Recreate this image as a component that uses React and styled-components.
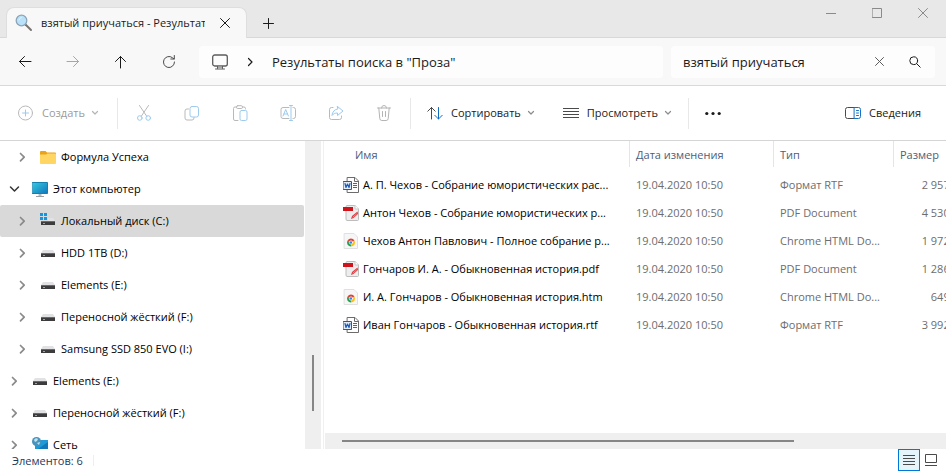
import React, { useState } from 'react';
import styled, { createGlobalStyle } from 'styled-components';

const GlobalStyle = createGlobalStyle`
  * {
    box-sizing: border-box;
  }

  body {
    margin: 0;
    overflow: hidden;
    font-family: 'Open Sans', 'Noto Sans', sans-serif;
    font-size: 11px;
    line-height: 16px;
    color: #000;
  }

  button,
  input {
    font: inherit;
    color: inherit;
  }
`;

const Window = styled.div`
  display: flex;
  flex-direction: column;
  height: 100vh;
  background: #fff;
  overflow: hidden;
`;

const IconButton = styled.button`
  display: flex;
  align-items: center;
  justify-content: center;
  flex: none;
  width: ${({ $width }) => $width || 32}px;
  height: ${({ $height }) => $height || 32}px;
  padding: 0;
  border: 0;
  border-radius: 4px;
  background: transparent;
  color: ${({ $color }) => $color || '#1b1b1b'};
`;

/* Title bar */
const TitleBar = styled.header`
  display: flex;
  align-items: flex-end;
  flex: none;
  height: 38px;
  padding-left: 6px;
  background: #e8e8e8;
  box-shadow: inset 0 -1px 0 #d8d8d8;
`;

const Tab = styled.div`
  display: flex;
  align-items: center;
  width: 241px;
  height: 31px;
  padding: 0 6px 0 8px;
  border: 1px solid #dedede;
  border-bottom: 0;
  border-radius: 8px 8px 0 0;
  background: #f8f8f8;
`;

const TabTitle = styled.span`
  flex: 1;
  margin: 0 5px 0 8px;
  overflow: hidden;
  white-space: nowrap;
  color: #1b1b1b;
`;

const WindowControls = styled.div`
  display: flex;
  align-self: flex-start;
  margin-left: auto;
`;

/* Navigation bar */
const NavBar = styled.div`
  display: flex;
  align-items: center;
  flex: none;
  height: 48px;
  padding: 0 11px 0 9px;
  border-bottom: 1px solid #d9d9d9;
  background: #f8f8f8;
`;

const NavButtons = styled.div`
  display: flex;
  gap: 16px;
  margin-right: 14px;
`;

const AddressBar = styled.div`
  display: flex;
  align-items: center;
  flex: 1;
  gap: 14px;
  height: 32px;
  margin-right: 8px;
  padding-left: 13px;
  border-radius: 4px;
  background: #fdfdfd;
  font-size: 13px;
  color: #1b1b1b;
  white-space: nowrap;
`;

const SearchBox = styled.div`
  display: flex;
  align-items: center;
  flex: none;
  width: 264px;
  height: 32px;
  padding: 0 2px 0 12px;
  border-radius: 4px;
  background: #fdfdfd;
`;

const SearchInput = styled.input`
  flex: 1;
  min-width: 0;
  height: 24px;
  padding: 0;
  border: 0;
  outline: 0;
  background: transparent;
  font-size: 13px;
  line-height: 24px;
  color: #1b1b1b;
`;

/* Command bar */
const CommandBar = styled.div`
  display: flex;
  align-items: center;
  flex: none;
  height: 55px;
  padding-right: 25px;
  border-bottom: 1px solid #d5d5d5;
`;

const CommandButton = styled.button`
  display: flex;
  align-items: center;
  flex: none;
  height: 32px;
  padding: 0;
  border: 0;
  background: transparent;
  color: #1b1b1b;
  white-space: nowrap;

  &:disabled {
    color: #9b9b9b;
  }
`;

const CommandLabel = styled.span`
  margin-left: 8px;
`;

const CommandGroup = styled.div`
  display: flex;
  gap: ${({ $gap }) => $gap || 0}px;
  padding: 0 ${({ $pad }) => $pad}px;
`;

const MenuMark = styled.span`
  display: flex;
  margin-left: 6px;
`;

const Divider = styled.span`
  flex: none;
  width: 1px;
  height: 31px;
  background: #e8e8e8;
`;

const Spacer = styled.span`
  flex: 1;
`;

/* Body */
const Body = styled.main`
  display: flex;
  flex: 1;
  min-height: 0;
`;

const Sidebar = styled.nav`
  display: flex;
  flex: none;
  width: 324px;
  padding-right: 2px;
  border-right: 1px solid #f0f0f0;
  overflow: hidden;
`;

const Tree = styled.ul`
  flex: 1;
  height: 100%;
  margin: 0;
  padding: 0;
  overflow: hidden;
  list-style: none;
`;

const TreeRow = styled.li`
  display: flex;
  align-items: center;
  height: 32px;
  margin-right: 1px;
  padding-left: ${({ $level }) => 6 + $level * 8}px;
  border-radius: 2px;
  background: ${({ $selected }) => ($selected ? '#d9d9d9' : 'transparent')};
`;

const TreeLink = styled.a`
  display: flex;
  align-items: center;
  flex: 1;
  gap: 5px;
  margin-left: 10px;
  color: #000;
  text-decoration: none;
  white-space: nowrap;
`;

const VerticalScroll = styled.div`
  flex: none;
  width: 16px;
  padding: 214px 7px 0;
  background: #efefef;
`;

const VerticalThumb = styled.div`
  width: 2px;
  height: 56px;
  background: #868686;
`;

const FilePane = styled.section`
  display: flex;
  flex-direction: column;
  flex: 1;
  min-width: 0;
  padding-left: 1px;
`;

const TableArea = styled.div`
  flex: 1;
  min-height: 0;
  overflow: hidden;
`;

const FileTable = styled.table`
  width: 649px;
  border-collapse: separate;
  border-spacing: 0;
  table-layout: fixed;
`;

const HeadCell = styled.th`
  width: ${({ $width }) => $width}px;
  height: 26px;
  padding: 2px 0 0 ${({ $pad }) => $pad || 6}px;
  border-right: 1px solid #e5e5e5;
  font-weight: 400;
  text-align: left;
  color: #4c607a;
`;

const Cell = styled.td`
  height: 28px;
  padding: 0 8px 0 6px;
  white-space: nowrap;
  text-align: ${({ $align }) => $align || 'left'};
  color: #6d6d6d;
`;

const HeadGap = styled.tr`
  height: 4px;
`;

const FileName = styled.div`
  display: flex;
  align-items: center;
  gap: 4px;
  padding-left: 12px;
  color: #000;

  svg {
    flex: none;
  }
`;

const HorizontalScroll = styled.div`
  flex: none;
  height: 16px;
  padding: 7px 17px;
  background: #efefef;
`;

const HorizontalThumb = styled.div`
  width: 77%;
  height: 2px;
  background: #868686;
`;

/* Status bar */
const StatusBar = styled.footer`
  display: flex;
  align-items: center;
  flex: none;
  height: 22px;
  padding: 0 4px 0 12px;
  color: #1e395b;
`;

const StatusText = styled.span`
  padding: 2px 10px 0 0;
`;

const StatusDivider = styled.span`
  width: 1px;
  height: 11px;
  background: #eeeeee;
`;

const ViewButton = styled.button`
  display: flex;
  align-items: center;
  justify-content: center;
  width: 22px;
  height: 22px;
  padding: 0;
  border: ${({ $active }) => ($active ? '1px solid #0078d7' : '0')};
  background: ${({ $active }) => ($active ? '#e5f3fb' : 'transparent')};
`;

function Svg({ size = 16, children }) {
  return (
    <svg
      width={size}
      height={size}
      viewBox={`0 0 ${size} ${size}`}
      fill="none"
      stroke="currentColor"
      strokeLinecap="round"
      strokeLinejoin="round"
      aria-hidden="true"
    >
      {children}
    </svg>
  );
}

const GRAY = '#b9b9b9';
const SKY = '#9ccbee';

const Chevron = ({ color = '#8c8c8c' }) => (
  <MenuMark>
    <Svg size={8}><path d="M1.500 2.500 4 5l2.500-2.500" stroke={color} strokeWidth="1.200" /></Svg>
  </MenuMark>
);

const TreeArrow = ({ open }) => (
  <Svg size={16}>
    {open
      ? <path d="m4.500 6 4 4 4-4" stroke="#333" strokeWidth="1.500" />
      : <path d="m6.500 4.500 3.700 3.700-3.700 3.700" stroke="#8a8a8a" strokeWidth="1.700" />}
  </Svg>
);

const CloseIcon = ({ size = 10 }) => (
  <Svg size={size}><path d={`M.5.5l${size - 1} ${size - 1}M${size - 0.5}.5l-${size - 1} ${size - 1}`} /></Svg>
);

const SearchTabIcon = () => (
  <Svg size={18}>
    <path d="m10.500 10.500 5.500 5.500" stroke="#77736f" strokeWidth="2" />
    <circle cx="6.500" cy="6.500" r="5.300" fill="#b9e1fa" stroke="#8ba5b8" strokeWidth="1.300" />
    <path d="M4 6a3 3 0 0 1 2.500-2.500" stroke="#e1f3ff" />
  </Svg>
);

const MonitorIcon = () => (
  <Svg size={16}>
    <rect x=".7" y="1" width="14.600" height="11" rx="2" stroke="#5c5c5c" strokeWidth="1.300" />
    <path d="M5.500 12.500v2M10.500 12.500v2M3.500 15h9" stroke="#5c5c5c" />
    <path d="M6 12.500h4v2H6z" fill="#aaa" stroke="none" />
  </Svg>
);

const CreateIcon = () => (
  <Svg>
    <circle cx="7.500" cy="8" r="7" stroke={GRAY} />
    <path d="M7.500 5v6M4.500 8h6" stroke={SKY} />
  </Svg>
);

const CutIcon = () => (
  <Svg>
    <path d="m3.500.5 7.200 10.700M12.500.5 5.300 11.200" stroke={GRAY} />
    <circle cx="3.800" cy="13" r="2.300" stroke={SKY} />
    <circle cx="12.200" cy="13" r="2.300" stroke={SKY} />
  </Svg>
);

const CopyIcon = () => (
  <Svg>
    <path d="M4.500 4H3a2 2 0 0 0-2 2v7a2 2 0 0 0 2 2h5a2 2 0 0 0 2-2v-.5" stroke={GRAY} />
    <rect x="6" y="1.500" width="8.500" height="10.500" rx="2" stroke={SKY} />
  </Svg>
);

const PasteIcon = () => (
  <Svg>
    <path d="M6 15.500H3A1.500 1.500 0 0 1 1.500 14V3.500A1.500 1.500 0 0 1 3 2h1.500M10.500 2H12a1.500 1.500 0 0 1 1.500 1.500V4" stroke={GRAY} />
    <rect x="4.500" y=".7" width="6" height="2.800" rx="1.200" stroke={GRAY} />
    <rect x="8" y="5.500" width="7" height="10" rx="1.500" stroke={SKY} />
  </Svg>
);

const RenameIcon = () => (
  <Svg>
    <path d="M9 2.500H3a2 2 0 0 0-2 2v7a2 2 0 0 0 2 2h6M13 2.500h.5a2 2 0 0 1 2 2v7a2 2 0 0 1-2 2H13" stroke={GRAY} />
    <path d="M9.500.5h3M9.500 15.500h3M11 .5v15M3 11l2.700-6.500L8.400 11M3.900 9h3.600" stroke={SKY} />
  </Svg>
);

const ShareIcon = () => (
  <Svg>
    <path d="M5 2.500H3.500a2 2 0 0 0-2 2v8a2 2 0 0 0 2 2h8a2 2 0 0 0 2-2V11" stroke={GRAY} />
    <path d="M9.500 1.500 15 6l-5.500 4.500V8C7 8 5.500 8.500 4 10.500 4.300 7 6.500 4.300 9.500 4z" stroke={SKY} />
  </Svg>
);

const DeleteIcon = () => (
  <Svg>
    <path d="M1.500 3h13M5.500 3a2.500 2.500 0 0 1 5 0M2.800 3l1 10.700a2 2 0 0 0 2 1.800h4.400a2 2 0 0 0 2-1.800l1-10.700M6.500 6.500v5M9.500 6.500v5" stroke="#b4b4b4" />
  </Svg>
);

const SortIcon = () => (
  <Svg>
    <path d="M4.500 14V2.500M.8 6.200 4.500 2.500l3.700 3.700" stroke="#4a4a4a" />
    <path d="M11.500 2.500V14M7.800 10.300l3.700 3.700 3.700-3.700" stroke="#0f6cbd" />
  </Svg>
);

const LinesIcon = () => (
  <Svg><path d="M0 3.500h16M0 6.500h16M0 9.500h16M0 12.500h16" stroke="#4a4a4a" strokeLinecap="butt" /></Svg>
);

const DetailsIcon = () => (
  <Svg>
    <path d="M9.500 2.500h-7a2 2 0 0 0-2 2v7a2 2 0 0 0 2 2h7" stroke="#4a4a4a" />
    <path d="M9.500 2.500h4a2 2 0 0 1 2 2v7a2 2 0 0 1-2 2h-4zM11.500 5.500h2M11.500 8h2M11.500 10.500h2" stroke="#1672c4" />
  </Svg>
);

const FolderIcon = () => (
  <Svg>
    <path d="M0 3a1 1 0 0 1 1-1h4.500L7 3.500h8a1 1 0 0 1 1 1V8H0z" fill="#e8a317" stroke="none" />
    <path d="M0 5.500h6L7.500 4.500H15a1 1 0 0 1 1 1v8.500a1 1 0 0 1-1 1H1a1 1 0 0 1-1-1z" fill="#ffd563" stroke="none" />
  </Svg>
);

const ComputerIcon = () => (
  <Svg>
    <defs>
      <linearGradient id="screen" x1="0" y1="0" x2="1" y2="1">
        <stop stopColor="#35c9dd" />
        <stop offset="1" stopColor="#1076bd" />
      </linearGradient>
    </defs>
    <rect x=".5" y="1.500" width="15" height="11" fill="url(#screen)" stroke="#1480ad" />
    <path d="M6.500 13h3v2h-3z" fill="#b6bdc3" stroke="none" />
    <path d="M4 15.500h8" stroke="#98a0a6" strokeLinecap="butt" />
  </Svg>
);

const DriveIcon = ({ system }) => (
  <Svg>
    <path d="M3 5h10l2 3H1z" fill="#e2e2e5" stroke="none" />
    <path d="M1 8h14v4H1z" fill="#3c3c3c" stroke="none" />
    <path d="M1 8h14v1H1z" fill="#6a6a6a" stroke="none" />
    <path d="M3 10h2v1H3z" fill="#39e35a" stroke="none" />
    {system && (
      <>
        <path d="M0 0h8v8H0z" fill="#d9d9d9" stroke="none" />
        <path d="M0 0h3v3H0zM4 0h3v3H4zM0 4h3v3H0zM4 4h3v3H4z" fill="#1595df" stroke="none" />
      </>
    )}
  </Svg>
);

const NetworkIcon = () => (
  <Svg>
    <path d="M3 3h13v9H3z" fill="#1f9ad6" stroke="none" />
    <path d="M6 12 16 5v7z" fill="#1378ba" stroke="none" />
    <path d="M9 12h2v3H9z" fill="#b6bdc3" stroke="none" />
    <circle cx="4.500" cy="4.500" r="4.500" fill="#4a93bd" stroke="none" />
    <path d="M2 3c1-2 3-2 4-1L5 4 3 5zM5 6l3-1-1 3z" fill="#bfe3ef" stroke="none" />
  </Svg>
);

const WordIcon = () => (
  <Svg>
    <path d="M4.500.5H12L15.500 4v11.500h-11z" fill="#fff" stroke="#6c6c6c" />
    <path d="M11.500.5v4h4" stroke="#6c6c6c" />
    <path d="M10 6.500h4M10 8.500h4M10 10.500h4" stroke="#2b6bc4" strokeLinecap="butt" />
    <rect x=".5" y="4.500" width="8" height="8" fill="#e3edf9" stroke="#1c5bb9" />
    <path d="m2 6.500 1 4 1.500-3.500L6 10.500l1-4" stroke="#1c5bb9" strokeWidth="1.200" />
  </Svg>
);

const PdfIcon = () => (
  <Svg>
    <path d="M3 1.500a1 1 0 0 1 1-1h8L15.500 4v10.500a1 1 0 0 1-1 1H4a1 1 0 0 1-1-1z" fill="#ededed" stroke="#bdbdbd" />
    <path d="M12 .5V4h3.500" fill="#fff" stroke="#c9c9c9" />
    <path d="M0 2h10v4H0z" fill="#d0131b" stroke="none" />
    <path d="m8 14 1-3 5.500-4.500L15 9l-4.500 4z" fill="#dc3c42" stroke="none" />
    <path d="m10 12 3.500-3" stroke="#f0a5a8" strokeWidth=".7" />
  </Svg>
);

const ChromeIcon = () => (
  <Svg>
    <path d="M1.500.5H11L14.500 4v11.500h-13z" fill="#f6f6f6" stroke="#e0e0e0" />
    <path d="M8 9.500 4.540 7.500a4 4 0 0 1 6.920 0z" fill="#df4335" stroke="none" />
    <path d="M8 9.500 11.460 7.500A4 4 0 0 1 8 13.500z" fill="#fbbf12" stroke="none" />
    <path d="M8 9.500v4a4 4 0 0 1-3.460-6z" fill="#2a9f4b" stroke="none" />
    <circle cx="8" cy="9.500" r="1.700" fill="#3b7ded" stroke="#fff" strokeWidth=".7" />
  </Svg>
);

const fileIcons = { word: WordIcon, pdf: PdfIcon, chrome: ChromeIcon };

const places = [
  { id: 'folder', name: 'Формула Успеха', level: 1, icon: <FolderIcon /> },
  { id: 'pc', name: 'Этот компьютер', level: 0, icon: <ComputerIcon />, open: true },
  { id: 'c', name: 'Локальный диск (C:)', level: 1, icon: <DriveIcon system /> },
  { id: 'd', name: 'HDD 1TB (D:)', level: 1, icon: <DriveIcon /> },
  { id: 'e', name: 'Elements (E:)', level: 1, icon: <DriveIcon /> },
  { id: 'f', name: 'Переносной жёсткий (F:)', level: 1, icon: <DriveIcon /> },
  { id: 'i', name: 'Samsung SSD 850 EVO (I:)', level: 1, icon: <DriveIcon /> },
  { id: 'e2', name: 'Elements (E:)', level: 0, icon: <DriveIcon /> },
  { id: 'f2', name: 'Переносной жёсткий (F:)', level: 0, icon: <DriveIcon /> },
  { id: 'net', name: 'Сеть', level: 0, icon: <NetworkIcon /> },
];

const files = [
  { icon: 'word', name: 'А. П. Чехов - Собрание юмористических рас...', type: 'Формат RTF', size: '2 957 КБ' },
  { icon: 'pdf', name: 'Антон Чехов - Собрание юмористических р...', type: 'PDF Document', size: '4 530 КБ' },
  { icon: 'chrome', name: 'Чехов Антон Павлович - Полное собрание р...', type: 'Chrome HTML Do...', size: '1 972 КБ' },
  { icon: 'pdf', name: 'Гончаров И. А. - Обыкновенная история.pdf', type: 'PDF Document', size: '1 286 КБ' },
  { icon: 'chrome', name: 'И. А. Гончаров - Обыкновенная история.htm', type: 'Chrome HTML Do...', size: '649 КБ' },
  { icon: 'word', name: 'Иван Гончаров - Обыкновенная история.rtf', type: 'Формат RTF', size: '3 992 КБ' },
];

function App() {
  const [selected, setSelected] = useState('c');
  const [query, setQuery] = useState('взятый приучаться');

  return (
    <Window>
      <GlobalStyle />
      <TitleBar>
        <Tab>
          <SearchTabIcon />
          <TabTitle>взятый приучаться - Результаты</TabTitle>
          <IconButton $width={30} $height={24} aria-label="Закрыть вкладку"><CloseIcon /></IconButton>
        </Tab>
        <IconButton $width={42} $height={30} aria-label="Новая вкладка">
          <Svg size={11}><path d="M5.500.5v10M.5 5.500h10" /></Svg>
        </IconButton>
        <WindowControls>
          <IconButton $width={46} $height={26} $color="#8a8a8a" aria-label="Свернуть">
            <Svg size={10}><path d="M0 5.500h10" /></Svg>
          </IconButton>
          <IconButton $width={46} $height={26} $color="#8a8a8a" aria-label="Развернуть">
            <Svg size={10}><rect x=".5" y=".5" width="9" height="9" /></Svg>
          </IconButton>
          <IconButton $width={46} $height={26} $color="#8a8a8a" aria-label="Закрыть"><CloseIcon /></IconButton>
        </WindowControls>
      </TitleBar>

      <NavBar>
        <NavButtons>
          <IconButton aria-label="Назад">
            <Svg><path d="M14 7.500H2.500M7.500 2.500l-5 5 5 5" /></Svg>
          </IconButton>
          <IconButton $color="#a6a6a6" aria-label="Вперёд" disabled>
            <Svg><path d="M2 7.500h11.500M8.500 2.500l5 5-5 5" /></Svg>
          </IconButton>
          <IconButton aria-label="Вверх">
            <Svg><path d="M7.500 14V2.500M2.500 7.500l5-5 5 5" /></Svg>
          </IconButton>
          <IconButton aria-label="Обновить">
            <Svg><path d="M13.500 8a5.500 5.500 0 1 1-2.100-4.300L13 5M13.300 1.500V5H9.800" stroke="#4a4a4a" /></Svg>
          </IconButton>
        </NavButtons>
        <AddressBar>
          <MonitorIcon />
          <Svg><path d="m6.500 4.500 3.500 3.500-3.500 3.500" strokeWidth="1.200" /></Svg>
          <span>Результаты поиска в "Проза"</span>
        </AddressBar>
        <SearchBox>
          <SearchInput aria-label="Поиск" value={query} onChange={e => setQuery(e.target.value)} />
          <IconButton $width={36} $color="#5c5c5c" aria-label="Очистить" onClick={() => setQuery('')}>
            <CloseIcon size={9} />
          </IconButton>
          <IconButton $width={36} aria-label="Найти">
            <Svg size={12}><circle cx="4.700" cy="4.700" r="3.900" /><path d="m7.700 7.700 3.500 3.500" /></Svg>
          </IconButton>
        </SearchBox>
      </NavBar>

      <CommandBar>
        <CommandGroup $pad={18}>
          <CommandButton disabled>
            <CreateIcon />
            <CommandLabel>Создать</CommandLabel>
            <Chevron color="#b5b5b5" />
          </CommandButton>
        </CommandGroup>
        <Divider />
        <CommandGroup $gap={16} $pad={10}>
          <IconButton aria-label="Вырезать" disabled><CutIcon /></IconButton>
          <IconButton aria-label="Копировать" disabled><CopyIcon /></IconButton>
          <IconButton aria-label="Вставить" disabled><PasteIcon /></IconButton>
          <IconButton aria-label="Переименовать" disabled><RenameIcon /></IconButton>
          <IconButton aria-label="Поделиться" disabled><ShareIcon /></IconButton>
          <IconButton aria-label="Удалить" disabled><DeleteIcon /></IconButton>
        </CommandGroup>
        <Divider />
        <CommandGroup $gap={28} $pad={16}>
          <CommandButton>
            <SortIcon />
            <CommandLabel>Сортировать</CommandLabel>
            <Chevron />
          </CommandButton>
          <CommandButton>
            <LinesIcon />
            <CommandLabel>Просмотреть</CommandLabel>
            <Chevron />
          </CommandButton>
        </CommandGroup>
        <Divider />
        <CommandGroup $pad={8}>
          <IconButton aria-label="Дополнительно">
            <Svg>
              <g fill="#1b1b1b" stroke="none">
                <circle cx="1.800" cy="8.500" r="1.600" />
                <circle cx="8" cy="8.500" r="1.600" />
                <circle cx="14.200" cy="8.500" r="1.600" />
              </g>
            </Svg>
          </IconButton>
        </CommandGroup>
        <Spacer />
        <CommandButton>
          <DetailsIcon />
          <CommandLabel>Сведения</CommandLabel>
        </CommandButton>
      </CommandBar>

      <Body>
        <Sidebar aria-label="Область навигации">
          <Tree>
            {places.map(place => (
              <TreeRow key={place.id} $level={place.level} $selected={selected === place.id}>
                <IconButton $width={16} $height={16} aria-label={`Развернуть ${place.name}`}>
                  <TreeArrow open={place.open} />
                </IconButton>
                <TreeLink href={`#${place.id}`} onClick={() => setSelected(place.id)}>
                  {place.icon}
                  {place.name}
                </TreeLink>
              </TreeRow>
            ))}
          </Tree>
          <VerticalScroll><VerticalThumb /></VerticalScroll>
        </Sidebar>

        <FilePane>
          <TableArea>
            <FileTable>
              <thead>
                <tr>
                  <HeadCell $width={305} $pad={30}>Имя</HeadCell>
                  <HeadCell $width={144}>Дата изменения</HeadCell>
                  <HeadCell $width={120}>Тип</HeadCell>
                  <HeadCell $width={80}>Размер</HeadCell>
                </tr>
              </thead>
              <tbody>
                <HeadGap />
                {files.map(file => {
                  const Icon = fileIcons[file.icon];
                  return (
                    <tr key={file.name}>
                      <Cell>
                        <FileName><Icon />{file.name}</FileName>
                      </Cell>
                      <Cell>19.04.2020 10:50</Cell>
                      <Cell>{file.type}</Cell>
                      <Cell $align="right">{file.size}</Cell>
                    </tr>
                  );
                })}
              </tbody>
            </FileTable>
          </TableArea>
          <HorizontalScroll><HorizontalThumb /></HorizontalScroll>
        </FilePane>
      </Body>

      <StatusBar>
        <StatusText>Элементов: 6</StatusText>
        <StatusDivider />
        <Spacer />
        <ViewButton $active aria-label="Таблица">
          <Svg size={12}><path d="M0 1.500h12M0 4.500h12M0 7.500h12M0 10.500h12" stroke="#4a4a4a" strokeLinecap="butt" /></Svg>
        </ViewButton>
        <ViewButton aria-label="Крупные значки">
          <Svg size={12}><path d="M.5.5h11v8H.5zM0 11.500h12" stroke="#4a4a4a" strokeLinecap="butt" strokeLinejoin="miter" /></Svg>
        </ViewButton>
      </StatusBar>
    </Window>
  );
}

export default App;
